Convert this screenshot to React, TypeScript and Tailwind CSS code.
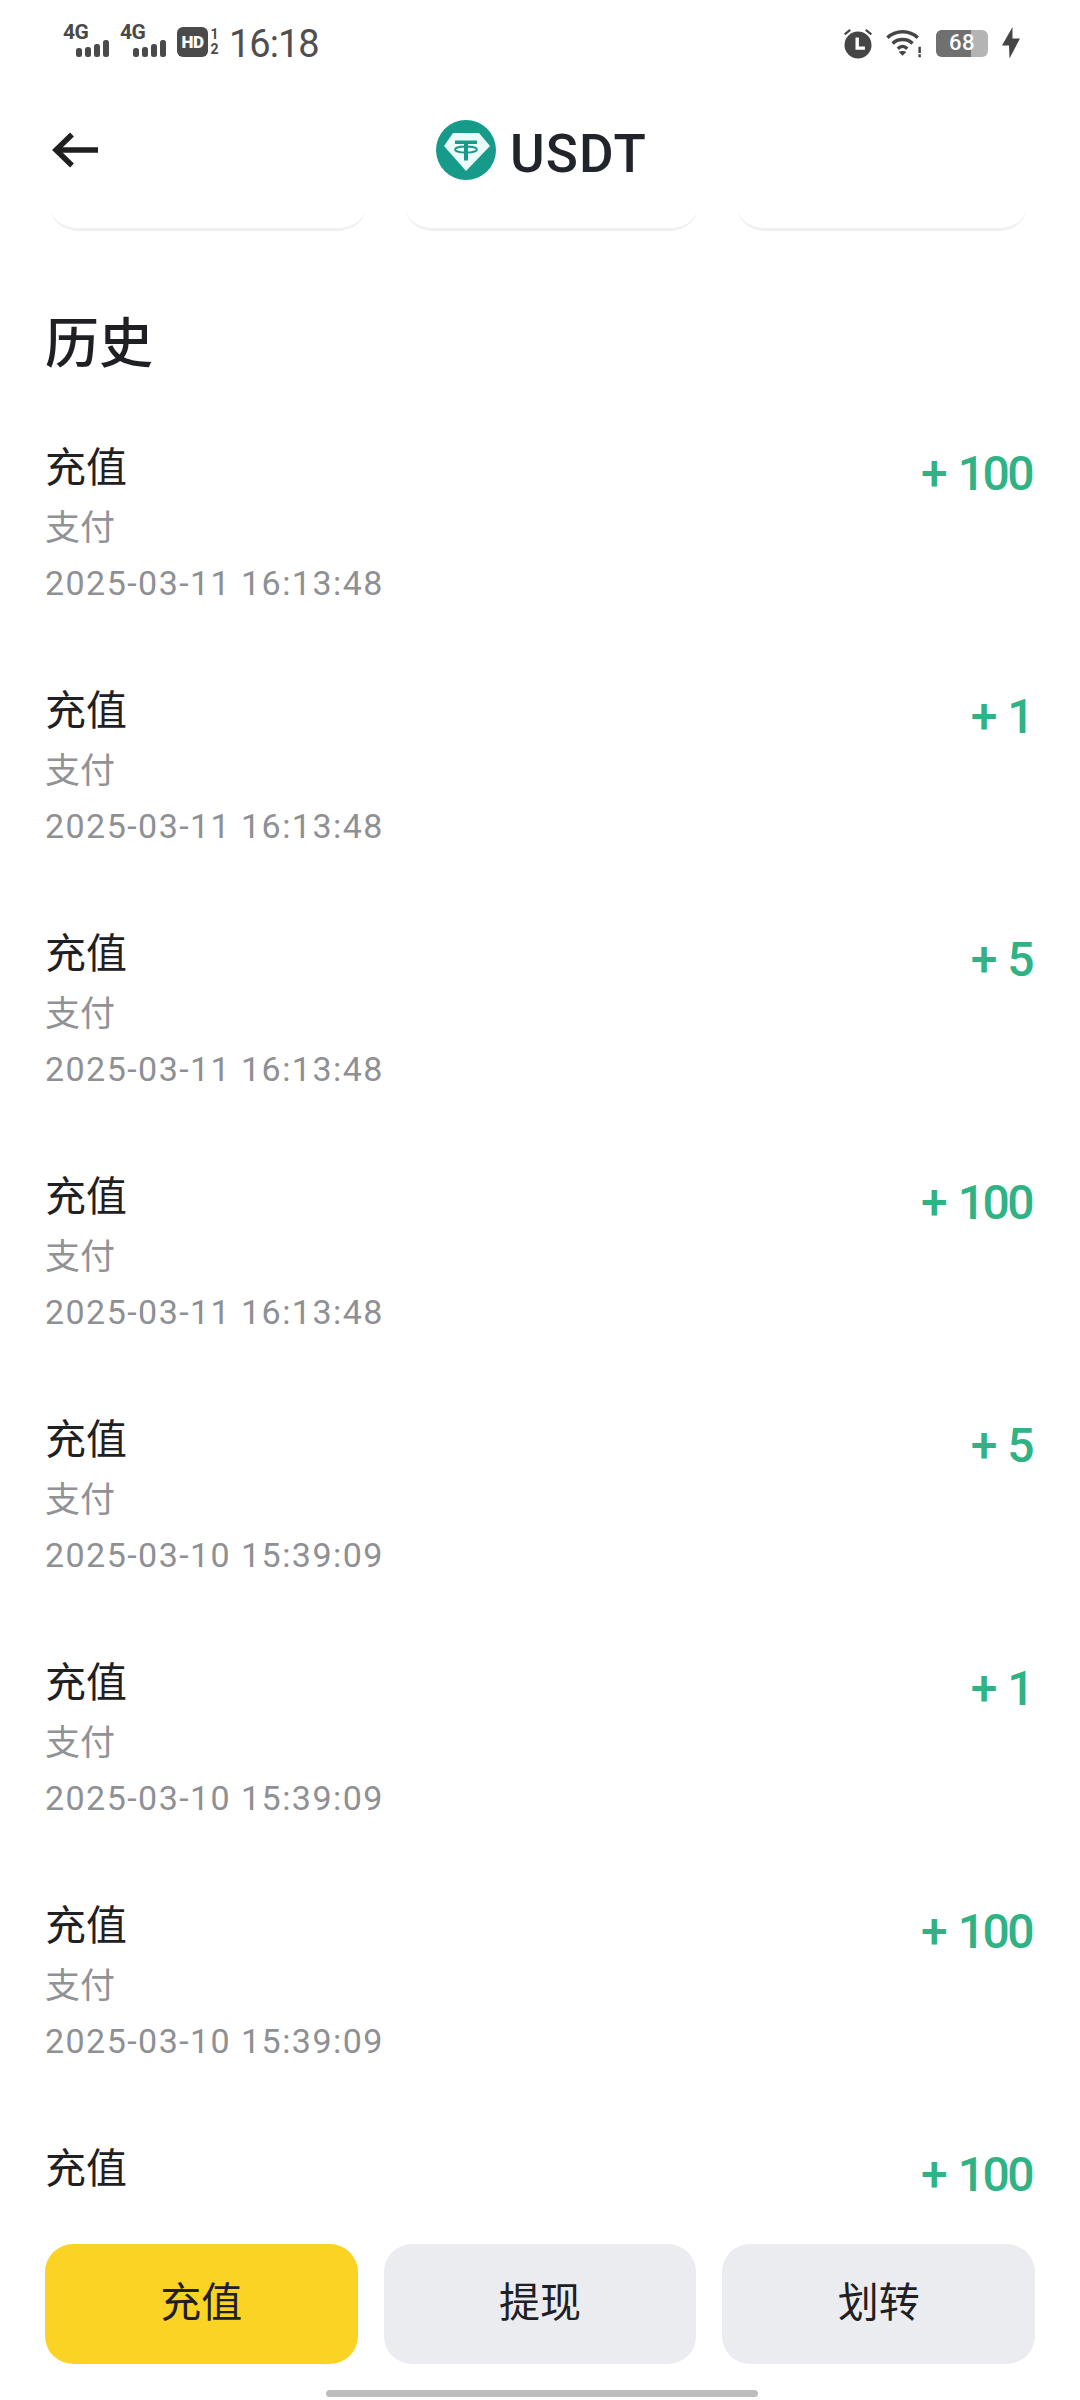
const cjk = "font-['Roboto','Noto_Sans_CJK_SC',sans-serif]";

const rows: [string, string][] = [
  ["2025-03-11 16:13:48", "+ 100"],
  ["2025-03-11 16:13:48", "+ 1"],
  ["2025-03-11 16:13:48", "+ 5"],
  ["2025-03-11 16:13:48", "+ 100"],
  ["2025-03-10 15:39:09", "+ 5"],
  ["2025-03-10 15:39:09", "+ 1"],
  ["2025-03-10 15:39:09", "+ 100"],
];

function Signal() {
  return (
    <div className="relative w-[57px] h-[34px]">
      <span className="absolute left-0 top-[-2px] text-[21px] leading-[20px] font-bold text-[#4a4a4a] tracking-[-0.5px]">4G</span>
      <svg className="absolute left-[12px] top-[16px]" width="36" height="17" viewBox="0 0 36 17" fill="#4a4a4a">
        <rect x="1" y="8" width="6" height="9" rx="2.5" />
        <rect x="10" y="7" width="6" height="10" rx="2.5" />
        <rect x="19" y="4" width="6" height="13" rx="2.5" />
        <rect x="28" y="0" width="6" height="17" rx="2.5" />
      </svg>
    </div>
  );
}

function StatusBar() {
  return (
    <div className="h-[72px] flex items-start justify-between pl-[63px] pr-[60px] pt-[24px] shrink-0 font-['Roboto',sans-serif]">
      <div className="flex items-start">
        <Signal />
        <Signal />
        <div className="w-[31px] h-[30px] mt-[3px] rounded-[6px] bg-[#4a4a4a] flex items-center justify-center text-white text-[17px] font-black leading-none tracking-[-0.5px]">HD</div>
        <div className="ml-[2px] w-[9px] flex flex-col items-center text-[#4a4a4a] text-[14px] font-bold leading-[15px] mt-[3px]">
          <span>1</span>
          <span>2</span>
        </div>
        <span className="ml-[10px] mt-[-2px] text-[38px] leading-[44px] text-[#4f4f4f] tracking-[-1px]">16:18</span>
      </div>
      <div className="flex items-center mt-[3px]">
        <svg width="30" height="32" viewBox="0 0 30 32" fill="#454545">
          <circle cx="15" cy="18" r="13.5" />
          <path d="M12.5 10.5h3.4v9h6v3.2h-9.4z" fill="#fff" />
          <path d="M1 6.5L6.5 2l1.4 1.7L2.4 8.2zM29 6.5L23.5 2l-1.4 1.7 5.5 4.5z" />
        </svg>
        <svg className="ml-[13px]" width="36" height="30" viewBox="0 0 38 30" fill="none" stroke="#454545" strokeWidth="3.6">
          <path d="M1.5 9.5C10 1 25 1 33.5 9.5" />
          <path d="M7 15.5C12.5 10 22.5 10 28 15.5" />
          <path d="M12.5 21C15.5 18 19.5 18 22.5 21" />
          <path d="M17.5 28.5L13.5 24.5C15.5 23 19.5 23 21.5 24.5Z" fill="#454545" stroke="none" />
          <path d="M35.5 19V25.5M35.5 27V30" strokeWidth="2.6" />
        </svg>
        <div className="ml-[14px] relative w-[52px] h-[27px] rounded-[6px] bg-[#b4b4b4] overflow-hidden flex">
          <div className="w-[35px] bg-[#707070]" />
          <span className="absolute inset-0 flex items-center justify-center text-white text-[22px] font-medium leading-none tracking-[0.5px]">68</span>
        </div>
        <svg className="ml-[14px]" width="18" height="32" viewBox="0 0 18 32" fill="#454545">
          <path d="M10.5 0L0 18.5h7L7.5 31.5 18 11.5h-7.5z" />
        </svg>
      </div>
    </div>
  );
}

function TetherLogo() {
  return (
    <svg width="60" height="60" viewBox="0 0 60 60">
      <circle cx="30" cy="30" r="30" fill="#169b8b" />
      <path d="M17 13h26l11 13-24 25L8 26z" fill="#eafcf9" />
      <path d="M19 20.5h22v3.5H32v3h-4v-3h-9z" fill="#169b8b" />
      <rect x="28" y="26" width="4" height="14.5" fill="#169b8b" />
      <ellipse cx="30" cy="29.5" rx="11" ry="3" fill="none" stroke="#169b8b" strokeWidth="1.8" />
    </svg>
  );
}

function Header() {
  return (
    <div className="relative h-[78px] mt-[39px] shrink-0 flex items-center justify-center">
      <svg className="absolute left-[52px] top-[21px]" width="46" height="36" viewBox="0 0 46 36" fill="none" stroke="#1f1f1f" strokeWidth="5.5">
        <path d="M46 18H4" />
        <path d="M20 2.5L4 18l16 15.5" />
      </svg>
      <div className="flex items-center ml-[3px]">
        <TetherLogo />
        <span className="ml-[14px] mt-[8px] text-[53px] leading-[60px] font-medium text-[#21242a] font-['Roboto',sans-serif] tracking-[1.2px]">USDT</span>
      </div>
    </div>
  );
}

function ClippedCards() {
  return (
    <div className="h-[18px] mt-[24px] shrink-0 overflow-hidden flex items-end pl-[49px] pr-[52px] gap-[37px]">
      <div className="w-[318px] h-[60px] rounded-b-[28px] border-b-[3px] border-[#f0f0f0] bg-white" />
      <div className="w-[295px] h-[60px] rounded-b-[28px] border-b-[3px] border-[#f0f0f0] bg-white" />
      <div className="flex-1 h-[60px] rounded-b-[28px] border-b-[3px] border-[#f0f0f0] bg-white" />
    </div>
  );
}

function Row({ date, amount }: { date?: string; amount: string }) {
  return (
    <div className={date ? "h-[243px] shrink-0 flex justify-between items-start px-[45px]" : "shrink-0 flex justify-between items-start px-[45px]"}>
      <div className="flex flex-col">
        <span className="text-[41px] leading-[52px] text-[#1f2024]">充值</span>
        {date && (
          <>
            <span className="mt-[11px] text-[35px] leading-[48px] text-[#909296]">支付</span>
            <span className="mt-[7px] text-[34px] leading-[46px] text-[#8e9094] tracking-[1.45px]">{date}</span>
          </>
        )}
      </div>
      <span className="mt-[2px] mr-[3px] text-[48px] leading-[60px] font-medium text-[#2fb385] tracking-[-2.5px] [word-spacing:3px]">{amount}</span>
    </div>
  );
}

function ActionButton({ label, primary }: { label: string; primary?: boolean }) {
  return (
    <button
      className={
        primary
          ? "flex-1 h-[120px] rounded-[28px] bg-[#fad324] text-[41px] text-[#1f2024]"
          : "flex-1 h-[120px] rounded-[28px] bg-[#ebecf0] text-[41px] text-[#1f2024]"
      }
    >
      {label}
    </button>
  );
}

export default function App() {
  return (
    <div className={`w-[1080px] h-[2400px] bg-white flex flex-col overflow-hidden ${cjk}`}>
      <StatusBar />
      <Header />
      <ClippedCards />
      <div className="flex-1 min-h-0 flex flex-col">
        <h2 className="mt-[84px] mb-[67px] px-[45px] text-[54px] leading-[60px] font-medium text-[#1f2024] shrink-0">历史</h2>
        <div className="flex flex-col">
          {rows.map((r, i) => (
            <Row key={i} date={r[0]} amount={r[1]} />
          ))}
          <Row amount="+ 100" />
        </div>
      </div>
      <div className="relative h-[190px] shrink-0 bg-white flex gap-[26px] px-[45px] pt-[34px]">
        <ActionButton label="充值" primary />
        <ActionButton label="提现" />
        <ActionButton label="划转" />
        <div className="absolute left-[326px] bottom-[3px] w-[432px] h-[7px] rounded-full bg-[#bdbdbd]" />
      </div>
    </div>
  );
}
